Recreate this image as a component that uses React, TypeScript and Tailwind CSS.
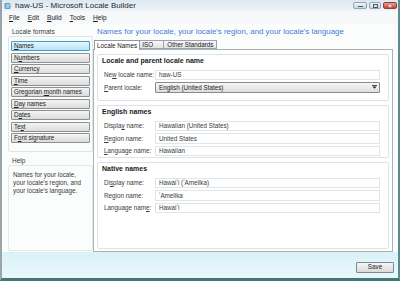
import React from "react";

const font = { fontFamily: '"Liberation Sans", Arial, sans-serif' };

const formats: [string, number][] = [
  ["Names", 0],
  ["Numbers", 1],
  ["Currency", 0],
  ["Time", 0],
  ["Gregorian month names", 10],
  ["Day names", 0],
  ["Dates", 1],
  ["Text", 2],
  ["Font signature", 1],
];

function Mn({ text, at }: { text: string; at: number }) {
  return (
    <span className="whitespace-pre">
      {text.slice(0, at)}
      <span className="underline underline-offset-1">{text[at]}</span>
      {text.slice(at + 1)}
    </span>
  );
}

function Field({ label, at, value }: { label: string; at: number; value: string }) {
  return (
    <div className="flex h-[12.5px] items-center">
      <div className="w-[57px] shrink-0 pl-[6px] text-[6.3px] text-[#3a3a3a]">
        <Mn text={label} at={at} />
      </div>
      <div className="flex h-[10.5px] flex-1 items-center border border-[#dfe5e9] bg-white pl-[3px] text-[6.3px] text-[#3a3a3a]">
        {value}
      </div>
    </div>
  );
}

function Group({ title, children, className }: { title: string; children: React.ReactNode; className?: string }) {
  return (
    <div className={`rounded-[2px] border border-[#dce3e7] pr-[8px] pt-[1px] ${className ?? ""}`}>
      <div className="pl-[4px] text-[7px] font-bold text-[#1a1a1a]">{title}</div>
      <div className="mt-[2px] flex flex-col">{children}</div>
    </div>
  );
}

export default function App() {
  return (
    <div
      style={font}
      className="flex h-[281px] w-[400px] flex-col overflow-hidden border-b-[3px] border-l-2 border-r-2 border-b-[#3f7a76] border-l-[#9aa4aa] border-r-[#5d8a8a] bg-[#fbfcfc]"
    >
      {/* Title bar */}
      <div className="flex h-[11px] shrink-0 items-center bg-gradient-to-b from-[#dce8f0] to-[#eef4f8] pl-[2px]">
        <svg width="8" height="8" viewBox="0 0 8 8" className="mr-[3px]">
          <rect x="0.5" y="1" width="6" height="6" rx="1" fill="#5fa3c9" />
          <path d="M2 3h4M2 5h3" stroke="#fff" strokeWidth="0.8" />
        </svg>
        <span className="text-[8px] text-[#1c2b36]">haw-US - Microsoft Locale Builder</span>
        <div className="ml-auto mr-[1px] mt-[2px] flex items-start gap-[2px] self-start">
          <div className="flex h-[7px] w-[14px] items-end justify-center rounded-[2px] border border-[#8fa6b5] bg-gradient-to-b from-[#f2f6f9] to-[#c7d6e0] pb-[1px]">
            <div className="h-[1px] w-[5px] bg-[#4a5a66]" />
          </div>
          <div className="flex h-[7px] w-[12px] items-center justify-center rounded-[2px] border border-[#8fa6b5] bg-gradient-to-b from-[#f2f6f9] to-[#c7d6e0]">
            <div className="h-[4px] w-[5px] border border-[#4a5a66]" />
          </div>
          <div className="flex h-[7px] w-[14px] items-center justify-center rounded-[2px] border border-[#9a3a32] bg-gradient-to-b from-[#e9a096] to-[#c5402f] text-[6px] font-bold leading-none text-white">
            ×
          </div>
        </div>
      </div>

      {/* Menu bar */}
      <div className="flex h-[13px] shrink-0 items-center gap-[8px] bg-[#f6f8fa] pl-[7px] text-[6.6px] text-[#1a1a1a]">
        <Mn text="File" at={0} />
        <Mn text="Edit" at={0} />
        <Mn text="Build" at={0} />
        <Mn text="Tools" at={0} />
        <Mn text="Help" at={0} />
      </div>

      {/* Body */}
      <div className="flex min-h-0 flex-1">
        {/* Left column */}
        <div className="flex w-[91px] shrink-0 flex-col pl-[6px] pt-[4px]">
          <div className="pl-[4px] text-[6.5px] leading-[8px] text-[#3a3a3a]">Locale formats</div>
          <div className="h-[116px] rounded-[2px] border border-[#dfe5e9] px-[2px] pt-[4px]">
            <div className="flex flex-col gap-[1.5px]">
              {formats.map(([name, at], i) => (
                <div
                  key={name}
                  className={`flex h-[10px] items-center rounded-[1px] border pl-[2px] text-[6.3px] text-[#222] ${
                    i === 0
                      ? "border-[#3c9fd0] bg-gradient-to-b from-[#e6f6fd] to-[#b9e3f7]"
                      : "border-[#8e8f8f] bg-gradient-to-b from-[#f4f4f4] to-[#dcdcdc]"
                  }`}
                >
                  <Mn text={name} at={at} />
                </div>
              ))}
            </div>
          </div>
          <div className="mt-[5px] pl-[4px] text-[6.5px] leading-[8px] text-[#3a3a3a]">Help</div>
          <div className="mb-[1px] flex-1 rounded-[2px] border border-[#e3e9ec] px-[4px] pt-[5px] text-[6.3px] leading-[8px] text-[#3a3a3a]">
            Names for your locale, your locale's region, and your locale's language.
          </div>
        </div>

        {/* Right column */}
        <div className="flex min-w-0 flex-1 flex-col pr-[5px] pt-[2px]">
          <div className="pl-[4px] text-[7.9px] leading-[11px] text-[#3f7bd6]">
            Names for your locale, your locale's region, and your locale's language
          </div>
          <div className="mt-[3px] flex items-end pl-[1px]">
            <div className="relative z-10 -mb-px flex h-[10px] items-center border border-b-0 border-[#8c9aa3] bg-white px-[2px] text-[6.3px] text-[#1a1a1a]">
              Locale Names
            </div>
            <div className="flex h-[9px] w-[24px] items-center border border-l-0 border-[#9aa5ab] bg-gradient-to-b from-[#f7f7f7] to-[#e2e2e2] pl-[2px] text-[6.3px] text-[#1a1a1a]">
              ISO
            </div>
            <div className="flex h-[9px] items-center border border-l-0 border-[#9aa5ab] bg-gradient-to-b from-[#f7f7f7] to-[#e2e2e2] px-[3px] text-[6.3px] text-[#1a1a1a]">
              Other Standards
            </div>
          </div>
          <div className="flex flex-1 flex-col gap-[4px] border border-[#a9b4ba] bg-white px-[3px] pb-[2px] pt-[4px]">
            <Group title="Locale and parent locale name" className="h-[47px]">
              <Field label="New locale name:" at={2} value="haw-US" />
              <div className="flex h-[12.5px] items-center">
                <div className="w-[57px] shrink-0 pl-[6px] text-[6.3px] text-[#3a3a3a]">
                  <Mn text="Parent locale:" at={0} />
                </div>
                <div className="flex h-[11px] flex-1 items-center justify-between rounded-[1px] border border-[#8a8a8a] bg-gradient-to-b from-[#f6f6f6] to-[#dedede] pl-[3px] pr-[2px] text-[6.3px] text-[#222]">
                  English (United States)
                  <svg width="5" height="4" viewBox="0 0 5 4">
                    <rect x="0" y="0" width="5" height="0.8" fill="#222" />
                    <path d="M0.5 1.5h4L2.5 3.8z" fill="#222" />
                  </svg>
                </div>
              </div>
            </Group>
            <Group title="English names" className="h-[53px]">
              <Field label="Display name:" at={6} value="Hawaiian (United States)" />
              <Field label="Region name:" at={0} value="United States" />
              <Field label="Language name:" at={0} value="Hawaiian" />
            </Group>
            <Group title="Native names" className="flex-1">
              <Field label="Display name:" at={2} value="Hawaiʻi (ʻAmelika)" />
              <Field label="Region name:" at={2} value="ʻAmelika" />
              <Field label="Language name:" at={12} value="Hawaiʻi" />
            </Group>
          </div>
        </div>
      </div>

      {/* Bottom bar */}
      <div className="flex h-[26px] shrink-0 items-center justify-end bg-gradient-to-b from-[#d9f2f8] to-[#e9f8fb] pr-[4px] pt-[4px]">
        <div className="flex h-[11px] w-[38px] items-center justify-center rounded-[1px] border border-[#7f8a90] bg-gradient-to-b from-[#f5f5f5] to-[#dadada] text-[6.3px] text-[#1a1a1a]">
          Save
        </div>
      </div>
    </div>
  );
}
